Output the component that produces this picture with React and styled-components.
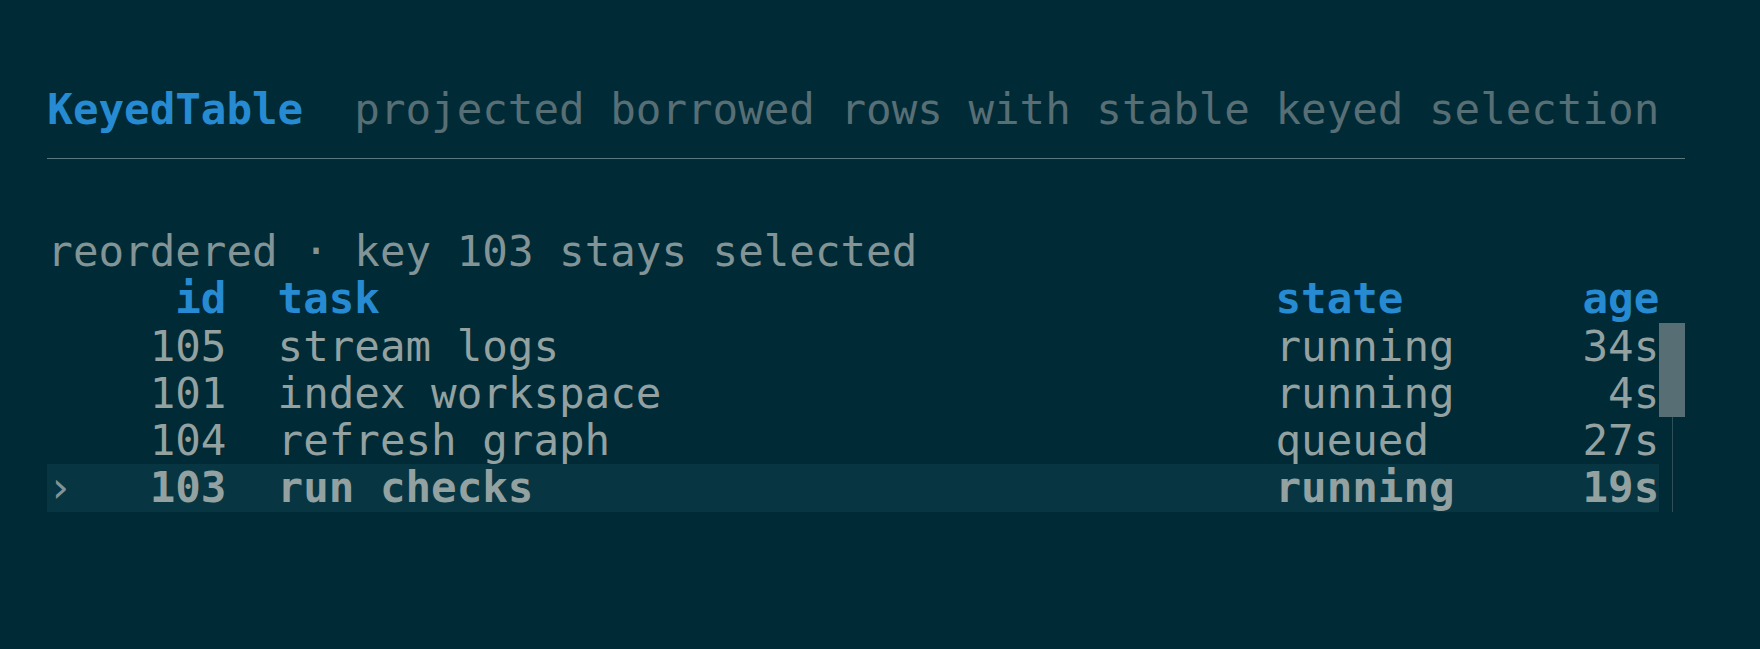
import React from 'react';
import styled, { createGlobalStyle } from 'styled-components';

const GlobalStyle = createGlobalStyle`
  html, body {
    margin: 0;
    background: #002b36;
  }
`

const Screen = styled.div`
  min-height: 100vh;
  box-sizing: border-box;
  padding: 85.7px 0 0 47.3px;
  background: #002b36;
  color: #93a1a1;
  font-family: "DejaVu Sans Mono", "Liberation Mono", monospace;
  font-size: 42.5px;
  line-height: 47.3px;
  white-space: pre;
`

const Header = styled.div`
  width: 64ch;
  padding-bottom: 25px;
  border-bottom: 1px solid #587a80;
  display: flex;
`

const Title = styled.span`
  color: #268bd2;
  font-weight: bold;
`

const Desc = styled.span`
  color: #586e75;
  margin-left: 2ch;
`

const Caption = styled.div`
  margin-top: 69px;
  color: #839496;
`

const Grid = styled.div`
  display: grid;
  grid-template-columns: 2ch 5ch 41ch 12ch 3ch;
  width: 63ch;
  height: 47.3px;
  background: ${p => (p.$selected ? '#073642' : 'transparent')};
  color: ${p => (p.$head ? '#268bd2' : '#93a1a1')};
  font-weight: ${p => (p.$head || p.$selected ? 'bold' : 'normal')};
`

const Cell = styled.span`
  text-align: ${p => (p.$right ? 'right' : 'left')};
  padding-left: ${p => (p.$pad ? '2ch' : '0')};
  overflow: hidden;
`

const Marker = styled.span`
  color: #839496;
  font-weight: normal;
`

const BodyWrap = styled.div`
  display: flex;
`

const Rows = styled.div`
  display: flex;
  flex-direction: column;
`

const Track = styled.div`
  width: 1ch;
  display: flex;
  flex-direction: column;
  align-items: center;
`

const Thumb = styled.div`
  width: 100%;
  height: 94.6px;
  background: #586e75;
`

const Rail = styled.div`
  width: 1px;
  flex: 1;
  background: #2f5058;
`

const rows = [
  { id: 105, task: 'stream logs', state: 'running', age: '34s' },
  { id: 101, task: 'index workspace', state: 'running', age: '4s' },
  { id: 104, task: 'refresh graph', state: 'queued', age: '27s' },
  { id: 103, task: 'run checks', state: 'running', age: '19s' },
]

const selectedKey = 103

const App = () => {
  return (
    <Screen>
      <GlobalStyle />
      <Header>
        <Title>KeyedTable</Title>
        <Desc>projected borrowed rows with stable keyed selection</Desc>
      </Header>
      <Caption>reordered · key {selectedKey} stays selected</Caption>
      <Grid $head>
        <Cell />
        <Cell $right>id</Cell>
        <Cell $pad>task</Cell>
        <Cell>state</Cell>
        <Cell $right>age</Cell>
      </Grid>
      <BodyWrap>
        <Rows>
          {rows.map(r => {
            const selected = r.id === selectedKey
            return (
              <Grid key={r.id} $selected={selected}>
                <Cell>{selected && <Marker>›</Marker>}</Cell>
                <Cell $right>{r.id}</Cell>
                <Cell $pad>{r.task}</Cell>
                <Cell>{r.state}</Cell>
                <Cell $right>{r.age}</Cell>
              </Grid>
            )
          })}
        </Rows>
        <Track>
          <Thumb />
          <Rail />
        </Track>
      </BodyWrap>
    </Screen>
  )
};

export default App;
